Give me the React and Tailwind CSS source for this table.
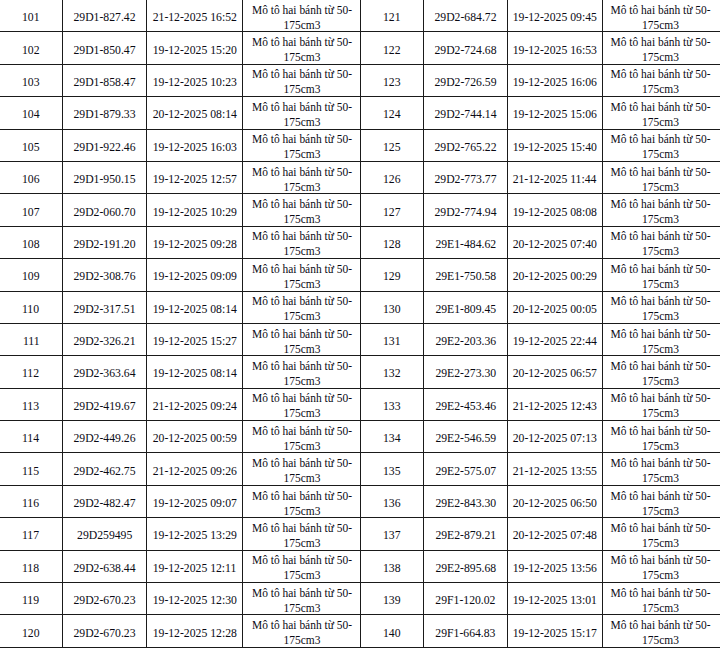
const left = [
  ["101", "29D1-827.42", "21-12-2025 16:52"],
  ["102", "29D1-850.47", "19-12-2025 15:20"],
  ["103", "29D1-858.47", "19-12-2025 10:23"],
  ["104", "29D1-879.33", "20-12-2025 08:14"],
  ["105", "29D1-922.46", "19-12-2025 16:03"],
  ["106", "29D1-950.15", "19-12-2025 12:57"],
  ["107", "29D2-060.70", "19-12-2025 10:29"],
  ["108", "29D2-191.20", "19-12-2025 09:28"],
  ["109", "29D2-308.76", "19-12-2025 09:09"],
  ["110", "29D2-317.51", "19-12-2025 08:14"],
  ["111", "29D2-326.21", "19-12-2025 15:27"],
  ["112", "29D2-363.64", "19-12-2025 08:14"],
  ["113", "29D2-419.67", "21-12-2025 09:24"],
  ["114", "29D2-449.26", "20-12-2025 00:59"],
  ["115", "29D2-462.75", "21-12-2025 09:26"],
  ["116", "29D2-482.47", "19-12-2025 09:07"],
  ["117", "29D259495", "19-12-2025 13:29"],
  ["118", "29D2-638.44", "19-12-2025 12:11"],
  ["119", "29D2-670.23", "19-12-2025 12:30"],
  ["120", "29D2-670.23", "19-12-2025 12:28"],
];

const right = [
  ["121", "29D2-684.72", "19-12-2025 09:45"],
  ["122", "29D2-724.68", "19-12-2025 16:53"],
  ["123", "29D2-726.59", "19-12-2025 16:06"],
  ["124", "29D2-744.14", "19-12-2025 15:06"],
  ["125", "29D2-765.22", "19-12-2025 15:40"],
  ["126", "29D2-773.77", "21-12-2025 11:44"],
  ["127", "29D2-774.94", "19-12-2025 08:08"],
  ["128", "29E1-484.62", "20-12-2025 07:40"],
  ["129", "29E1-750.58", "20-12-2025 00:29"],
  ["130", "29E1-809.45", "20-12-2025 00:05"],
  ["131", "29E2-203.36", "19-12-2025 22:44"],
  ["132", "29E2-273.30", "20-12-2025 06:57"],
  ["133", "29E2-453.46", "21-12-2025 12:43"],
  ["134", "29E2-546.59", "20-12-2025 07:13"],
  ["135", "29E2-575.07", "21-12-2025 13:55"],
  ["136", "29E2-843.30", "20-12-2025 06:50"],
  ["137", "29E2-879.21", "20-12-2025 07:48"],
  ["138", "29E2-895.68", "19-12-2025 13:56"],
  ["139", "29F1-120.02", "19-12-2025 13:01"],
  ["140", "29F1-664.83", "19-12-2025 15:17"],
];

const TYPE = "Mô tô hai bánh từ 50-175cm3";

const cell =
  "flex items-center justify-center text-center border-r border-b border-[#1a1a1a] h-[32.4px] pt-[2px]";

// the source text is a little narrower than Times at this height
const Txt = ({ children }) => (
  <span className="inline-block whitespace-nowrap scale-x-[0.9]">{children}</span>
);

const App = () => {
  return (
    <div
      className="w-[720px] h-[649px] overflow-hidden bg-white text-[#0a0a14] text-[13px] leading-[15px]"
      style={{ fontFamily: '"Liberation Serif", "Times New Roman", serif' }}
    >
      <div className="grid grid-cols-[63px_84px_96px_118px_63px_84px_95px_125px] w-[728px]">
        {left.map((row, i) => {
          const r = right[i];
          return [
            <div key={`a${i}`} className={cell}><Txt>{row[0]}</Txt></div>,
            <div key={`b${i}`} className={cell}><Txt>{row[1]}</Txt></div>,
            <div key={`c${i}`} className={cell}><Txt>{row[2]}</Txt></div>,
            <div key={`d${i}`} className={cell}>
              <span className="block shrink-0 w-[124px] scale-x-[0.88]">{TYPE}</span>
            </div>,
            <div key={`e${i}`} className={cell}><Txt>{r[0]}</Txt></div>,
            <div key={`f${i}`} className={cell}><Txt>{r[1]}</Txt></div>,
            <div key={`g${i}`} className={cell}><Txt>{r[2]}</Txt></div>,
            <div key={`h${i}`} className={`${cell} justify-start pl-[3px]`}>
              <span className="block shrink-0 w-[124px] origin-left scale-x-[0.88]">{TYPE}</span>
            </div>,
          ];
        })}
      </div>
    </div>
  );
};

export default App;
